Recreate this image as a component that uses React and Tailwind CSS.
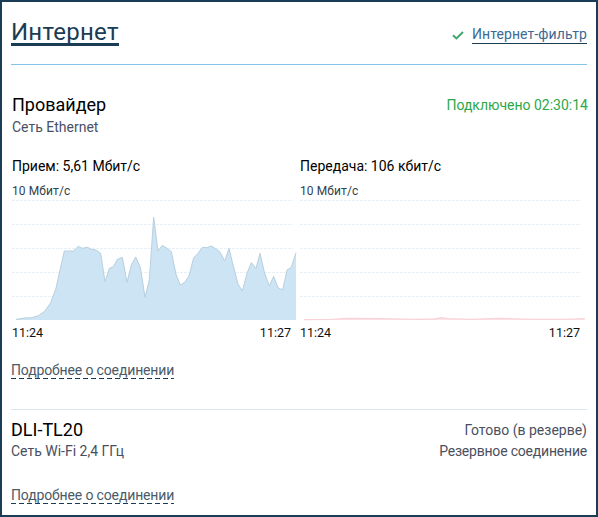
import React from "react";

const rxPoints = "48,418 75,414 95,413 115,407 135,393 152,368 168,325 180,270 193,213 220,213 235,199 247,205 262,202 275,208 288,210 302,220 315,305 328,265 340,260 352,238 367,232 381,307 394,255 407,231 421,262 435,352 448,300 461,112 474,213 487,196 501,205 514,215 528,283 541,315 554,307 567,288 581,233 594,220 607,202 621,203 634,198 647,206 660,216 674,243 687,205 701,262 714,312 727,333 741,280 754,248 768,265 780,220 794,280 808,318 821,289 834,323 848,330 861,270 874,262 888,218";
const txPoints = "18,419 100,418 150,415 250,416 350,418 410,417 430,413 450,416 520,418 600,415 700,418 800,418 860,416";
const gridLines = [61.5, 133.5, 205.5, 277.5, 349.5];

const Chart = ({ points, baseX, endX, fill, stroke, strokeWidth, viewX, gridEnd }) => (
    <div className="flex flex-col">
        <div className="h-[17px] text-[12px] leading-[17px] tracking-[0.1px] text-[#333f48]">10 Мбит/с</div>
        <svg width="290" height="123" viewBox={`${viewX} 60 870 369`} className="block">
            {gridLines.map((y) => (
                <line key={y} x1={viewX} x2={gridEnd} y1={y} y2={y} stroke="#e8f1f7" strokeWidth="3" strokeDasharray="9 3" />
            ))}
            <polygon points={`${baseX},420 ${points} ${endX},420`} fill={fill} />
            <polyline points={points} fill="none" stroke={stroke} strokeWidth={strokeWidth} />
        </svg>
        <div className="mt-[1px] flex justify-between pr-[9px] text-[12.5px] leading-[18px] text-[#111]">
            <span>11:24</span>
            <span>11:27</span>
        </div>
    </div>
);

const MoreLink = () => (
    <a className="self-start bg-[repeating-linear-gradient(90deg,#1a3c54_0_5px,transparent_5px_8px)] bg-[length:100%_1px] bg-bottom bg-no-repeat pb-px text-[14px] leading-[16px] tracking-[-0.14px] text-[#4a5a68]">
        Подробнее о соединении
    </a>
);

export default function App() {
    return (
        <div className="h-[517px] w-[598px] overflow-hidden border-2 border-[#1a3c54] bg-white px-[9px] font-['Roboto',sans-serif]">
            <div className="flex h-[63px] items-start justify-between border-b border-[#85c3ea]">
                <h1 className="mt-[19px] border-b-[3px] border-[#1a3c54] text-[24px] leading-[22px] tracking-[0.25px] text-[#1a3c54]">Интернет</h1>
                <div className="mt-[24px] flex items-center gap-[8px]">
                    <svg width="12" height="9" viewBox="0 0 12 9" fill="none" stroke="#3fa66b" strokeWidth="2">
                        <path d="M1 4.2 L4.4 7.4 L11 1" />
                    </svg>
                    <a className="border-b border-[#1a3c54] text-[14px] leading-[17px] tracking-[0.1px] text-[#3c6a94]">Интернет-фильтр</a>
                </div>
            </div>

            <div className="flex justify-between pt-[28px] pl-[1px]">
                <div>
                    <div className="text-[18px] leading-[24px] text-black">Провайдер</div>
                    <div className="text-[14px] leading-[20px] text-[#4a4f66]">Сеть Ethernet</div>
                </div>
                <div className="-mr-px text-[14px] leading-[24px] text-[#2ba84a]">Подключено 02:30:14</div>
            </div>

            <div className="grid grid-cols-[288px_289px] pt-[19px] pl-[1px]">
                <div className="h-[27px] text-[14px] leading-[20px] text-black">Прием: 5,61 Мбит/с</div>
                <div className="h-[27px] text-[14px] leading-[20px] text-black">Передача: 106 кбит/с</div>
                <Chart points={rxPoints} baseX={48} endX={888} fill="#cce4f4" stroke="#b9cfdd" strokeWidth={3} viewX={36} gridEnd={880} />
                <Chart points={txPoints} baseX={18} endX={860} fill="#fbe3e6" stroke="#f9d3d9" strokeWidth={4} viewX={6} gridEnd={848} />
            </div>

            <div className="flex flex-col border-b border-[#d9e6ec] pt-[20px] pb-[30px]">
                <MoreLink />
            </div>

            <div className="flex justify-between pt-[8px]">
                <div>
                    <div className="text-[18px] leading-[24px] text-black">DLI-TL20</div>
                    <div className="text-[14px] leading-[18px] text-[#4a4f5e]">Сеть Wi-Fi 2,4 ГГц</div>
                </div>
                <div className="text-right text-[14px] text-[#4a4f5e]">
                    <div className="leading-[24px]">Готово (в резерве)</div>
                    <div className="leading-[18px] tracking-[-0.2px]">Резервное соединение</div>
                </div>
            </div>

            <div className="flex flex-col pt-[27px]">
                <MoreLink />
            </div>
        </div>
    );
}
